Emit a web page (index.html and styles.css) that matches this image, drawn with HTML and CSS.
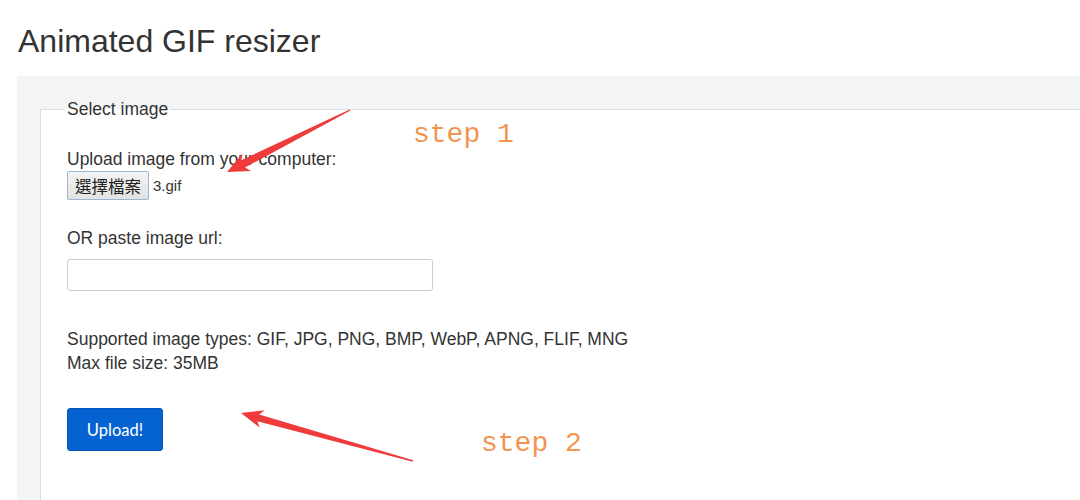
FILE: index.html
```html
<!DOCTYPE html>
<html lang="en">
<head>
    <meta charset="UTF-8">
    <title>Animated GIF resizer</title>
    <link rel="stylesheet" href="styles.css">
</head>
<body>

<div class="page">

    <h1 class="title">Animated GIF resizer</h1>

    <div class="panel">
        <form class="upload-form">
            <fieldset class="box">
                <legend>Select image</legend>

                <label class="field-label">Upload image from your computer:</label>
                <div class="file-row">
                    <button type="button" class="file-btn">選擇檔案</button>
                    <span class="file-name">3.gif</span>
                </div>

                <label class="field-label spaced" for="url">OR paste image url:</label>
                <input type="text" id="url" class="url-input">

                <p class="info">
                    Supported image types: GIF, JPG, PNG, BMP, WebP, APNG, FLIF, MNG<br>
                    Max file size: 35MB
                </p>

                <button type="submit" class="upload-btn">Upload!</button>
            </fieldset>
        </form>
    </div>

    <!-- annotations drawn over the screenshot -->
    <svg class="marks" width="1080" height="500" viewBox="0 0 1080 500">
        <polygon fill="#ef3b3b" points="227,172 251.1,171 245,167.5 350.4,110.6 349.6,109.4 241.3,160.3 242.6,153.2"/>
        <polygon fill="#ef3b3b" points="241,413 259.7,427.6 257.3,421.2 412.8,461.7 413.2,460.3 259.2,414.4 264.7,410.2"/>
    </svg>
    <div class="step step-one">step 1</div>
    <div class="step step-two">step 2</div>

</div>

</body>
</html>
```

FILE: styles.css
```css
html, body {
    margin: 0;
    padding: 0;
    overflow: hidden;
    background-color: #fff;
}

body {
    font-family: "Liberation Sans", Arial, sans-serif;
    font-size: 17.5px;
    color: #333;
}

.page {
    position: relative;
    padding: 24px 0 0 17px;
    height: 476px;
}

.title {
    font-size: 32px;
    font-weight: normal;
    line-height: 35px;
    margin: 0 0 17px 1px;
    color: #333;
}

.panel {
    background-color: #f3f4f6;
    padding: 23px 0 0 23px;
}

.upload-form {
    margin: 0;
}

.box {
    margin: 0;
    padding: 28px 25px 49px 26px;
    border: 1px solid #dadee4;
    border-right: 0;
    border-bottom: 0;
    background-color: #fff;
}

.box legend {
    padding: 0 2px;
    margin-left: -2px;
    line-height: 20px;
    font-size: 17.5px;
}

.field-label {
    display: block;
    line-height: 24px;
}

.field-label.spaced {
    margin-top: 26px;
}

.file-row {
    display: flex;
    align-items: center;
    height: 29px;
}

.file-btn {
    height: 29px;
    padding: 0 7px;
    margin: 0 4px 0 0;
    font-family: "Noto Sans CJK TC", "Noto Sans CJK SC", sans-serif;
    font-size: 16.5px;
    color: #222;
    background: linear-gradient(#f4f4f4, #e2e2e2);
    border: 1px solid #9db6d6;
    border-radius: 2px;
}

.file-name {
    font-size: 15px;
}

.url-input {
    display: block;
    width: 366px;
    height: 32px;
    margin-top: 9px;
    border: 1px solid #ccc;
    border-radius: 3px;
    box-sizing: border-box;
    padding: 4px 8px;
}

.info {
    margin: 36px 0 0;
    line-height: 24px;
}

.upload-btn {
    display: block;
    margin-top: 33px;
    width: 96px;
    height: 43px;
    font-family: Lato, sans-serif;
    font-size: 16.5px;
    color: #fff;
    background-color: #0563d1;
    border: 1px solid #0458bd;
    border-radius: 3px;
}

.marks {
    position: absolute;
    top: 0;
    left: 0;
    pointer-events: none;
}

.step {
    position: absolute;
    font-family: "Liberation Mono", "Courier New", monospace;
    font-size: 28px;
    line-height: 28px;
    color: #f29450;
}

.step-one {
    left: 413px;
    top: 121px;
}

.step-two {
    left: 481px;
    top: 430px;
}
```
